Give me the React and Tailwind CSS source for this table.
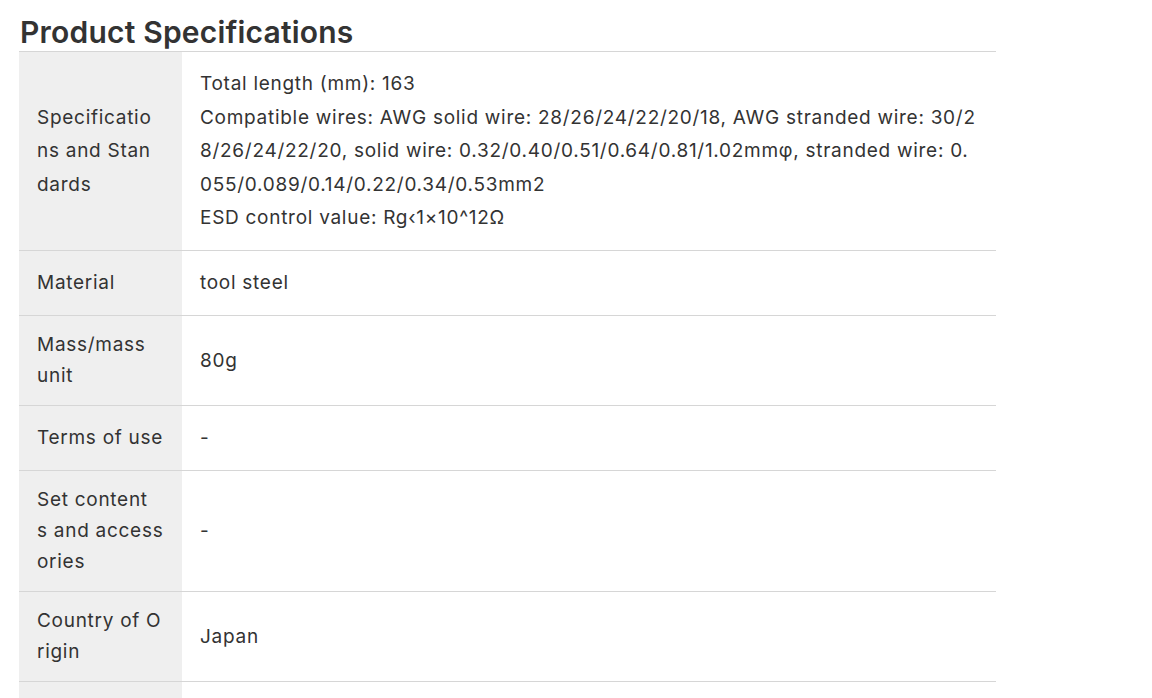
const specs = [
  {
    label: ["Specificatio", "ns and Stan", "dards"],
    lead: "leading-[33.6px]",
    value: [
      "Total length (mm): 163",
      "Compatible wires: AWG solid wire: 28/26/24/22/20/18, AWG stranded wire: 30/2",
      "8/26/24/22/20, solid wire: 0.32/0.40/0.51/0.64/0.81/1.02mmφ, stranded wire: 0.",
      "055/0.089/0.14/0.22/0.34/0.53mm2",
      "ESD control value: Rg‹1×10^12Ω",
    ],
  },
  { label: ["Material"], value: ["tool steel"] },
  { label: ["Mass/mass", "unit"], value: ["80g"] },
  { label: ["Terms of use"], value: ["-"] },
  { label: ["Set content", "s and access", "ories"], value: ["-"] },
  { label: ["Country of O", "rigin"], value: ["Japan"] },
];

function SpecRow({ row }) {
  return (
    <div className="flex min-h-[65px] border-b border-[#d6d6d6]">
      <div
        className={`w-[163px] shrink-0 bg-[#efefef] px-[18px] py-[13.5px] flex items-center ${row.lead || "leading-[31px]"}`}
      >
        <div>
          {row.label.map((line, i) => (
            <div key={i} className="whitespace-nowrap">{line}</div>
          ))}
        </div>
      </div>
      <div className="flex-1 px-[18px] py-[15px] flex items-center leading-[33.6px]">
        <div>
          {row.value.map((line, i) => (
            <div key={i} className="whitespace-nowrap">{line}</div>
          ))}
        </div>
      </div>
    </div>
  );
}

export default function App() {
  return (
    <div
      className="bg-white min-h-screen text-[#333] text-[19px] tracking-[0.72px] overflow-hidden"
      style={{ fontFamily: "Inter, 'Noto Sans', sans-serif" }}
    >
      <div className="ml-[19px] w-[977px]">
        <h2 className="pl-[1px] pt-[14px] pb-[1px] text-[30px] leading-[36px] font-semibold tracking-[0.2px] text-[#333]">
          Product Specifications
        </h2>
        <div className="border-t border-[#d6d6d6]">
          {specs.map((row, i) => (
            <SpecRow key={i} row={row} />
          ))}
          <div className="flex h-[40px]">
            <div className="w-[163px] shrink-0 bg-[#efefef]"></div>
            <div className="flex-1"></div>
          </div>
        </div>
      </div>
    </div>
  );
}
